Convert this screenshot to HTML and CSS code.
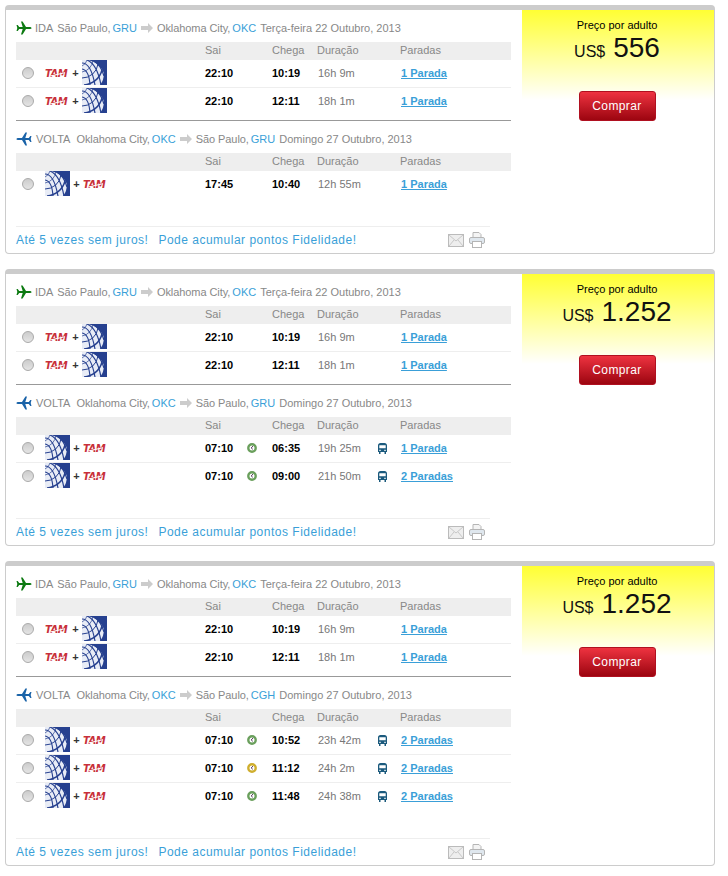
FILE: index.html
```html
<!DOCTYPE html>
<html lang="pt">
<head>
<meta charset="utf-8">
<title>Resultados de voos</title>
<link rel="stylesheet" href="styles.css">
</head>
<body>
<svg class="defs" width="0" height="0" aria-hidden="true">
  <symbol id="plane" viewBox="0 0 16 14">
    <path d="M15.6 7c0-.7-1-1.1-2.2-1.1H10L6.6.4H5l1.7 5.5H3.2L1.7 4H.5l.8 3-.8 3h1.2l1.5-1.9h3.5L5 13.6h1.6L10 8.1h3.4c1.2 0 2.2-.4 2.2-1.1z"/>
  </symbol>
  <symbol id="arrow" viewBox="0 0 12 10">
    <path d="M0 3h7V0l5 5-5 5V7H0z" fill="#ccc"/>
  </symbol>
  <symbol id="united" viewBox="0 0 25 25">
    <rect width="25" height="25" fill="#26408f"/>
    <path d="M6 0a22 22 0 0 1 16 13q0 7-4 12H0V0z" fill="#e8ecf6"/>
    <g stroke="#26408f" fill="none">
      <path d="M5 0a9 9 0 0 1-5 6M11 0a13 13 0 0 1-11 12" stroke-width=".7"/>
      <path d="M16 4a16 16 0 0 1-16 14" stroke-width="1"/>
      <path d="M20 10a20 20 0 0 1-18 15" stroke-width="1.500"/>
      <path d="M0 3q9 0 13 22M0 9q7 1 8 16M5 0q10 4 14 25M11 0q8 5 11 16" stroke-width="1.200"/>
    </g>
  </symbol>
  <symbol id="bus" viewBox="0 0 9 11">
    <path d="M2.500 0h4C8 0 9 1 9 2.500V9H8v2H6.500V9h-4v2H1V9H0V2.500C0 1 1 0 2.500 0zM1.300 2.300v3h6.400v-3zM1.300 6.700v1.200h1.400V6.700zM6.300 6.700v1.200h1.400V6.700z" fill="#1b5a7d" fill-rule="evenodd"/>
  </symbol>
  <symbol id="clock" viewBox="0 0 10 10">
    <circle cx="5" cy="5" r="3.700" fill="#fff" stroke="currentColor" stroke-width="2.400"/>
    <path d="M6 3 4.200 5l1.600 1.300" fill="none" stroke="#5a3a60" stroke-width="1"/>
  </symbol>
  <symbol id="mail" viewBox="0 0 16 13">
    <rect x=".5" y=".5" width="15" height="12" fill="#eee" stroke="#bbb"/>
    <path d="M1 1l7 6 7-6M1 12l5-6M15 12l-5-6" fill="none" stroke="#c8c8c8"/>
  </symbol>
  <symbol id="printer" viewBox="0 0 16 16">
    <path d="M4 6V.500h6l2 2V6" fill="#f4f4f4" stroke="#b5b5b5"/>
    <rect x=".5" y="5.500" width="15" height="6" rx="1.500" fill="#dfe7ee" stroke="#b5b5b5"/>
    <rect x="3.500" y="9.500" width="9" height="6" fill="#fff" stroke="#b5b5b5"/>
  </symbol>
</svg>

<section class="card">
  <div class="main">
    <div class="leg">
      <h3 class="heading"><svg class="plane ida"><use href="#plane"/></svg><span class="dir">IDA</span><span class="city">São Paulo,</span><a class="code">GRU</a><svg class="arrow"><use href="#arrow"/></svg><span class="city">Oklahoma City,</span><a class="code">OKC</a><span class="date">Terça-feira 22 Outubro, 2013</span></h3>
      <div class="row head"><span class="c-sai">Sai</span><span class="c-chega">Chega</span><span class="c-dur">Duração</span><span class="c-par">Paradas</span></div>
      <div class="row"><i class="radio"></i><span class="logos"><b class="tam">TAM</b><b class="plus">+</b><svg class="united"><use href="#united"/></svg></span><b class="c-sai">22:10</b><b class="c-chega">10:19</b><span class="c-dur">16h 9m</span><a class="c-par stops">1 Parada</a></div>
      <div class="row"><i class="radio"></i><span class="logos"><b class="tam">TAM</b><b class="plus">+</b><svg class="united"><use href="#united"/></svg></span><b class="c-sai">22:10</b><b class="c-chega">12:11</b><span class="c-dur">18h 1m</span><a class="c-par stops">1 Parada</a></div>
    </div>
    <div class="leg">
      <h3 class="heading"><svg class="plane volta"><use href="#plane"/></svg><span class="dir">VOLTA</span><span class="city">Oklahoma City,</span><a class="code">OKC</a><svg class="arrow"><use href="#arrow"/></svg><span class="city">São Paulo,</span><a class="code">GRU</a><span class="date">Domingo 27 Outubro, 2013</span></h3>
      <div class="row head"><span class="c-sai">Sai</span><span class="c-chega">Chega</span><span class="c-dur">Duração</span><span class="c-par">Paradas</span></div>
      <div class="row"><i class="radio"></i><span class="logos"><svg class="united"><use href="#united"/></svg><b class="plus">+</b><b class="tam">TAM</b></span><b class="c-sai">17:45</b><b class="c-chega">10:40</b><span class="c-dur">12h 55m</span><a class="c-par stops">1 Parada</a></div>
    </div>
    <div class="foot"><a>Até 5 vezes sem juros!</a><a>Pode acumular pontos Fidelidade!</a><svg class="mail"><use href="#mail"/></svg><svg class="printer"><use href="#printer"/></svg></div>
  </div>
  <aside class="price">
    <p class="label">Preço por adulto</p>
    <p class="amount"><span class="cur">US$</span><span class="val">556</span></p>
    <button class="buy" type="button">Comprar</button>
  </aside>
</section>

<section class="card">
  <div class="main">
    <div class="leg">
      <h3 class="heading"><svg class="plane ida"><use href="#plane"/></svg><span class="dir">IDA</span><span class="city">São Paulo,</span><a class="code">GRU</a><svg class="arrow"><use href="#arrow"/></svg><span class="city">Oklahoma City,</span><a class="code">OKC</a><span class="date">Terça-feira 22 Outubro, 2013</span></h3>
      <div class="row head"><span class="c-sai">Sai</span><span class="c-chega">Chega</span><span class="c-dur">Duração</span><span class="c-par">Paradas</span></div>
      <div class="row"><i class="radio"></i><span class="logos"><b class="tam">TAM</b><b class="plus">+</b><svg class="united"><use href="#united"/></svg></span><b class="c-sai">22:10</b><b class="c-chega">10:19</b><span class="c-dur">16h 9m</span><a class="c-par stops">1 Parada</a></div>
      <div class="row"><i class="radio"></i><span class="logos"><b class="tam">TAM</b><b class="plus">+</b><svg class="united"><use href="#united"/></svg></span><b class="c-sai">22:10</b><b class="c-chega">12:11</b><span class="c-dur">18h 1m</span><a class="c-par stops">1 Parada</a></div>
    </div>
    <div class="leg">
      <h3 class="heading"><svg class="plane volta"><use href="#plane"/></svg><span class="dir">VOLTA</span><span class="city">Oklahoma City,</span><a class="code">OKC</a><svg class="arrow"><use href="#arrow"/></svg><span class="city">São Paulo,</span><a class="code">GRU</a><span class="date">Domingo 27 Outubro, 2013</span></h3>
      <div class="row head"><span class="c-sai">Sai</span><span class="c-chega">Chega</span><span class="c-dur">Duração</span><span class="c-par">Paradas</span></div>
      <div class="row"><i class="radio"></i><span class="logos"><svg class="united"><use href="#united"/></svg><b class="plus">+</b><b class="tam">TAM</b></span><b class="c-sai">07:10</b><svg class="clock ok"><use href="#clock"/></svg><b class="c-chega">06:35</b><span class="c-dur">19h 25m</span><svg class="bus"><use href="#bus"/></svg><a class="c-par stops">1 Parada</a></div>
      <div class="row"><i class="radio"></i><span class="logos"><svg class="united"><use href="#united"/></svg><b class="plus">+</b><b class="tam">TAM</b></span><b class="c-sai">07:10</b><svg class="clock ok"><use href="#clock"/></svg><b class="c-chega">09:00</b><span class="c-dur">21h 50m</span><svg class="bus"><use href="#bus"/></svg><a class="c-par stops">2 Paradas</a></div>
    </div>
    <div class="foot"><a>Até 5 vezes sem juros!</a><a>Pode acumular pontos Fidelidade!</a><svg class="mail"><use href="#mail"/></svg><svg class="printer"><use href="#printer"/></svg></div>
  </div>
  <aside class="price">
    <p class="label">Preço por adulto</p>
    <p class="amount"><span class="cur">US$</span><span class="val">1.252</span></p>
    <button class="buy" type="button">Comprar</button>
  </aside>
</section>

<section class="card">
  <div class="main">
    <div class="leg">
      <h3 class="heading"><svg class="plane ida"><use href="#plane"/></svg><span class="dir">IDA</span><span class="city">São Paulo,</span><a class="code">GRU</a><svg class="arrow"><use href="#arrow"/></svg><span class="city">Oklahoma City,</span><a class="code">OKC</a><span class="date">Terça-feira 22 Outubro, 2013</span></h3>
      <div class="row head"><span class="c-sai">Sai</span><span class="c-chega">Chega</span><span class="c-dur">Duração</span><span class="c-par">Paradas</span></div>
      <div class="row"><i class="radio"></i><span class="logos"><b class="tam">TAM</b><b class="plus">+</b><svg class="united"><use href="#united"/></svg></span><b class="c-sai">22:10</b><b class="c-chega">10:19</b><span class="c-dur">16h 9m</span><a class="c-par stops">1 Parada</a></div>
      <div class="row"><i class="radio"></i><span class="logos"><b class="tam">TAM</b><b class="plus">+</b><svg class="united"><use href="#united"/></svg></span><b class="c-sai">22:10</b><b class="c-chega">12:11</b><span class="c-dur">18h 1m</span><a class="c-par stops">1 Parada</a></div>
    </div>
    <div class="leg">
      <h3 class="heading"><svg class="plane volta"><use href="#plane"/></svg><span class="dir">VOLTA</span><span class="city">Oklahoma City,</span><a class="code">OKC</a><svg class="arrow"><use href="#arrow"/></svg><span class="city">São Paulo,</span><a class="code">CGH</a><span class="date">Domingo 27 Outubro, 2013</span></h3>
      <div class="row head"><span class="c-sai">Sai</span><span class="c-chega">Chega</span><span class="c-dur">Duração</span><span class="c-par">Paradas</span></div>
      <div class="row"><i class="radio"></i><span class="logos"><svg class="united"><use href="#united"/></svg><b class="plus">+</b><b class="tam">TAM</b></span><b class="c-sai">07:10</b><svg class="clock ok"><use href="#clock"/></svg><b class="c-chega">10:52</b><span class="c-dur">23h 42m</span><svg class="bus"><use href="#bus"/></svg><a class="c-par stops">2 Paradas</a></div>
      <div class="row"><i class="radio"></i><span class="logos"><svg class="united"><use href="#united"/></svg><b class="plus">+</b><b class="tam">TAM</b></span><b class="c-sai">07:10</b><svg class="clock warn"><use href="#clock"/></svg><b class="c-chega">11:12</b><span class="c-dur">24h 2m</span><svg class="bus"><use href="#bus"/></svg><a class="c-par stops">2 Paradas</a></div>
      <div class="row"><i class="radio"></i><span class="logos"><svg class="united"><use href="#united"/></svg><b class="plus">+</b><b class="tam">TAM</b></span><b class="c-sai">07:10</b><svg class="clock ok"><use href="#clock"/></svg><b class="c-chega">11:48</b><span class="c-dur">24h 38m</span><svg class="bus"><use href="#bus"/></svg><a class="c-par stops">2 Paradas</a></div>
    </div>
    <div class="foot"><a>Até 5 vezes sem juros!</a><a>Pode acumular pontos Fidelidade!</a><svg class="mail"><use href="#mail"/></svg><svg class="printer"><use href="#printer"/></svg></div>
  </div>
  <aside class="price">
    <p class="label">Preço por adulto</p>
    <p class="amount"><span class="cur">US$</span><span class="val">1.252</span></p>
    <button class="buy" type="button">Comprar</button>
  </aside>
</section>
</body>
</html>
```
FILE: styles.css
```css
* { box-sizing: border-box; }
html, body { background: #fff; }
body {
  margin: 5px 0 0 5px;
  font: 11px/14px "Liberation Sans", Arial, sans-serif;
  color: #888;
}
.defs { position: absolute; }
p, h3 { margin: 0; font: inherit; }

.card {
  display: flex;
  width: 710px;
  margin-bottom: 15px;
  border: 1px solid #ccc;
  border-top: 5px solid #ccc;
  border-radius: 4px;
}
.main {
  display: flex;
  flex-direction: column;
  width: 505px;
  padding-left: 10px;
}
.price {
  display: flex;
  flex-direction: column;
  align-items: center;
  align-self: flex-start;
  width: 192px;
  margin-left: 11px;
  padding: 8px 2px 0 0;
  background: linear-gradient(#ff3, #fff 90px);
  color: #000;
}
.label { line-height: 14px; }
.amount {
  display: flex;
  align-items: baseline;
  gap: 8px;
  height: 26px;
  margin-top: 3px;
  line-height: 26px;
  color: #111;
}
.cur { font-size: 16px; }
.val { font-size: 28px; }
.buy {
  width: 77px;
  height: 30px;
  margin-top: 30px;
  padding: 0;
  border: 1px solid #b01020;
  border-radius: 3px;
  background: linear-gradient(#ee3340, #9c0510);
  color: #fff;
  font: 12px "Liberation Sans", Arial, sans-serif;
  letter-spacing: .4px;
}

.leg + .leg { margin-top: 4px; border-top: 1px solid #999; }
.heading {
  display: flex;
  align-items: center;
  height: 32px;
  padding-top: 4px;
  white-space: nowrap;
}
.plane { width: 16px; height: 14px; margin-right: 3px; }
.ida { fill: #0d7a12; }
.volta { fill: #1a63a8; transform: scaleX(-1); margin-right: 4px; }
.dir { margin-right: 6px; }
.ida + .dir { margin-right: 4px; }
.city { margin-right: 2px; letter-spacing: -.07px; }
.code { color: #3a9fd8; margin-right: 4px; }
.arrow { width: 12px; height: 10px; margin-right: 4px; }

.row {
  display: grid;
  grid-template-columns: 29px 160px 42px 25px 46px 60px 23px 1fr;
  align-items: center;
  height: 28px;
  width: 495px;
  padding-bottom: 1px;
  border-bottom: 1px solid #eee;
}
.row:last-child { border-bottom-color: transparent; }
.row.head {
  height: 18px;
  padding-bottom: 2px;
  background: #eee;
  border: 0;
  color: #888;
}
.row.head .c-dur, .row.head .c-par { margin-left: -1px; }
.row b { color: #000; font-size: 11px; }
.c-sai { grid-column: 3; }
.clock { grid-column: 4; width: 10px; height: 10px; }
.ok { color: #6a9f5c; }
.warn { color: #cfae2e; }
.c-chega { grid-column: 5; }
.c-dur { grid-column: 6; color: #777; }
.row.head .c-dur { color: #888; }
.bus { grid-column: 7; width: 9px; height: 11px; }
.c-par { grid-column: 8; }
.stops {
  font: bold 11px "Liberation Sans", Arial, sans-serif;
  color: #3a9fd8;
  text-decoration: underline;
}
.radio {
  grid-column: 1;
  justify-self: start;
  width: 12px;
  height: 12px;
  margin-left: 6px;
  border: 1px solid #aaa;
  border-radius: 50%;
  background: linear-gradient(#ccc, #e4e4e4);
}
.logos {
  grid-column: 2;
  align-self: start;
  display: flex;
  align-items: center;
  height: 25px;
}
.row .tam {
  position: relative;
  width: 24px;
  margin-top: 2px;
  overflow: hidden;
  font: italic bold 10px/10px "DejaVu Sans", sans-serif;
  letter-spacing: -.5px;
  color: #c8303a;
}
.tam::after {
  content: "";
  position: absolute;
  left: 4px;
  right: 4px;
  top: 5px;
  height: 1px;
  background: #fff;
  transform: rotate(-12deg);
}
.row .plus { width: 13px; margin-top: 1px; text-align: center; color: #333; }
.united { width: 25px; height: 25px; }

.foot {
  display: flex;
  align-items: center;
  width: 474px;
  height: 27px;
  margin-top: 27px;
  border-top: 1px solid #eee;
  font-size: 12px;
  letter-spacing: .5px;
  color: #3a9fd8;
}
.foot a + a { margin-left: 10px; }
.mail { width: 16px; height: 13px; margin-left: auto; }
.printer { width: 16px; height: 16px; margin-left: 5px; margin-right: 5px; }
```
